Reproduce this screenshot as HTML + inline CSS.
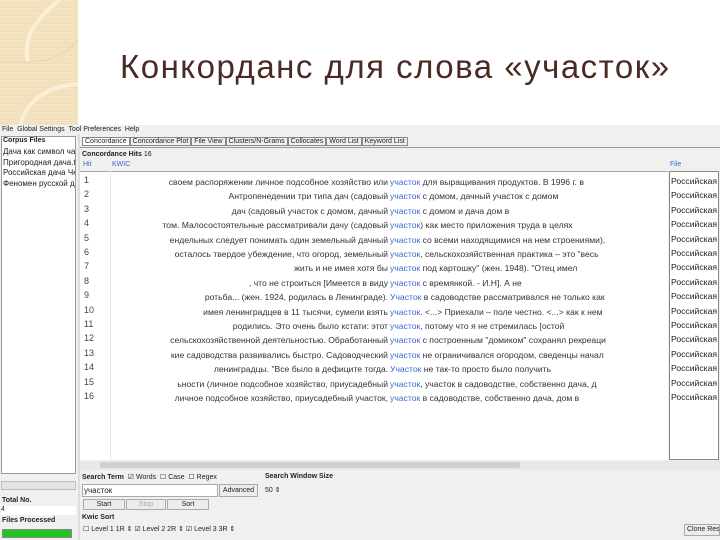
<!DOCTYPE html>
<html><head><meta charset="utf-8"><style>
*{margin:0;padding:0;box-sizing:border-box}
body{width:720px;height:540px;overflow:hidden;background:#fff;position:relative;font-family:"Liberation Sans","DejaVu Sans",sans-serif;font-size:8px;color:#222}
.a{position:absolute;white-space:nowrap}
.title{left:120px;top:48px;font-size:33px;color:#4a2a22;letter-spacing:1.5px;font-family:"Liberation Sans",sans-serif}
.k{color:#3a6ad0}
.row{position:absolute;left:110px;width:558px;height:14px;font-size:8.6px;line-height:14px;color:#333}
.l{position:absolute;right:280px;white-space:nowrap}
.r{position:absolute;left:280px;white-space:nowrap}
.n{position:absolute;left:84px;font-size:9px;color:#444}
.f{position:absolute;left:671px;font-size:8.6px;width:48px;overflow:hidden;white-space:nowrap}
.btn{position:absolute;background:#ececec;border:1px solid #aaa;font-size:7px;text-align:center;line-height:10px;white-space:nowrap;overflow:hidden}
</style></head><body>
<div class="a" style="left:0;top:0;width:78px;height:126px;background:repeating-linear-gradient(#f4e6c6 0 1px,#efdcb4 1px 2px)"></div>
<svg class="a" style="left:0;top:0" width="78" height="126"><path d="M60 0 Q20 30 28 62" stroke="#faf0d8" stroke-width="4" fill="none"/><path d="M0 62 L28 62 Q60 62 78 40" stroke="#e8d4a8" stroke-width="1" fill="none"/><path d="M20 126 Q30 88 78 84" stroke="#faf0d8" stroke-width="4" fill="none"/></svg>
<div class="a title">Конкорданс для слова «участок»</div>
<div class="a" style="left:0;top:125px;width:720px;height:9px;background:#f0f0f0;font-size:7px;line-height:9px">&nbsp;File &nbsp;Global Settings &nbsp;Tool Preferences &nbsp;Help</div>
<div class="a" style="left:0;top:134px;width:720px;height:406px;background:#f0f0f0"></div>
<div class="a" style="left:1px;top:136px;width:75px;height:338px;background:#fff;border:1px solid #999"></div>
<div class="a" style="left:3px;top:137px;font-size:7px;font-weight:bold">Corpus Files</div>
<div class="a" style="left:3px;top:147px;font-size:8px;line-height:10.5px;width:72px;overflow:hidden">Дача как символ час<br>Пригородная дача.txt<br>Российская дача Чем<br>Феномен русской дач</div>
<div class="a" style="left:1px;top:481px;width:75px;height:9px;background:#e4e4e4;border:1px solid #bbb"></div>
<div class="a" style="left:2px;top:497px;font-size:7px;font-weight:bold">Total No.</div>
<div class="a" style="left:1px;top:506px;width:75px;height:9px;background:#fff;font-size:7px">4</div>
<div class="a" style="left:2px;top:517px;font-size:7px;font-weight:bold">Files Processed</div>
<div class="a" style="left:2px;top:529px;width:70px;height:9px;background:#22c422;border:1px solid #888"></div>
<div class="a" style="left:78px;top:134px;width:2px;height:406px;background:#ddd"></div>
<div class="a" style="left:82px;top:137px;font-size:7px;line-height:10px;background:#f0f0f0"><span style="border:1px solid #888;padding:0 2px;background:#fff">Concordance</span><span style="border:1px solid #888;padding:0 2px">Concordance Plot</span><span style="border:1px solid #888;padding:0 2px">File View</span><span style="border:1px solid #888;padding:0 2px">Clusters/N-Grams</span><span style="border:1px solid #888;padding:0 2px">Collocates</span><span style="border:1px solid #888;padding:0 2px">Word List</span><span style="border:1px solid #888;padding:0 2px">Keyword List</span></div>
<div class="a" style="left:80px;top:147px;width:640px;height:1px;background:#999"></div>
<div class="a" style="left:82px;top:151px;font-size:7px;font-weight:bold">Concordance Hits <span style="font-weight:normal">16</span></div>
<div class="a k" style="left:83px;top:161px;font-size:7px">Hit</div>
<div class="a k" style="left:112px;top:161px;font-size:7px">KWIC</div>
<div class="a k" style="left:670px;top:161px;font-size:7px">File</div>
<div class="a" style="left:80px;top:171px;width:588px;height:289px;background:#fff;border-top:1px solid #aaa"></div>
<div class="a" style="left:110px;top:171px;width:1px;height:289px;background:#e8e8e8"></div>
<div class="a" style="left:669px;top:171px;width:50px;height:289px;background:#fff;border:1px solid #888"></div>
<div id="rows"></div>
<div class="a" style="left:80px;top:461px;width:640px;height:9px;background:#e8e8e8"></div>
<div class="a" style="left:100px;top:462px;width:420px;height:6px;background:#d0d0d0;border-radius:2px"></div>
<div class="a" style="left:82px;top:473px;font-size:7px;font-weight:bold">Search Term &nbsp;<span style="font-weight:normal">☑ Words &nbsp;☐ Case &nbsp;☐ Regex</span></div>
<div class="a" style="left:265px;top:473px;font-size:7px;font-weight:bold">Search Window Size</div>
<div class="a" style="left:82px;top:484px;width:136px;height:13px;background:#fff;border:1px solid #aaa;font-size:8px;line-height:12px;padding-left:1px">участок</div>
<div class="btn" style="left:219px;top:484px;width:39px;height:13px;line-height:12px">Advanced</div>
<div class="a" style="left:265px;top:486px;font-size:7px">50 ⇕</div>
<div class="btn" style="left:83px;top:499px;width:42px;height:11px">Start</div>
<div class="btn" style="left:126px;top:499px;width:40px;height:11px;color:#aaa">Stop</div>
<div class="btn" style="left:167px;top:499px;width:42px;height:11px">Sort</div>
<div class="a" style="left:82px;top:514px;font-size:7px;font-weight:bold">Kwic Sort</div>
<div class="a" style="left:83px;top:525px;font-size:7px">☐ Level 1 1R ⇕ ☑ Level 2 2R ⇕ ☑ Level 3 3R ⇕</div>
<div class="btn" style="left:684px;top:524px;width:36px;height:12px;font-size:7px;text-align:left;padding-left:2px">Clone Results</div>
<script>
var d=[["своем распоряжении личное подсобное хозяйство или ","участок"," для выращивания продуктов. В 1996 г. в"],
["Антропенедении три типа дач (садовый ","участок"," с домом, дачный участок с домом"],
["дач (садовый участок с домом, дачный ","участок"," с домом и дача дом в"],
["том. Малосостоятельные рассматривали дачу (садовый ","участок",") как место приложения труда в целях"],
["ендельных следует понимать один земельный дачный ","участок"," со всеми находящимися на нем строениями),"],
["осталось твердое убеждение, что огород, земельный ","участок",", сельскохозяйственная практика – это \"весь"],
["жить и не имея хотя бы ","участок"," под картошку\" (жен. 1948). \"Отец имел"],
[", что не строиться [Имеется в виду ","участок"," с времянкой. - И.Н]. А не"],
["ротьба... (жен. 1924, родилась в Ленинграде). ","Участок"," в садоводстве рассматривался не только как"],
["имея ленинградцев в 11 тысячи, сумели взять ","участок",". <...> Приехали – поле честно. <...> как к нем"],
["родились. Это очень было кстати: этот ","участок",", потому что я не стремилась [остой"],
["сельскохозяйственной деятельностью. Обработанный ","участок"," с построенным \"домиком\" сохранял рекреаци"],
["кие садоводства развивались быстро. Садоводческий ","участок"," не ограничивался огородом, сведенцы начал"],
["ленинградцы. \"Все было в дефиците тогда. ","Участок"," не так-то просто было получить"],
["ьности (личное подсобное хозяйство, приусадебный ","участок",", участок в садоводстве, собственно дача, д"],
["личное подсобное хозяйство, приусадебный участок, ","участок"," в садоводстве, собственно дача, дом в"]];
var h="";
for(var i=0;i<16;i++){var y=175+i*14.4;
h+='<div class="n" style="top:'+y+'px">'+(i+1)+'</div>';
h+='<div class="row" style="top:'+y+'px"><span class="l">'+d[i][0]+'</span><span class="r"><span class="k">'+d[i][1]+'</span>'+d[i][2]+'</span></div>';
h+='<div class="f" style="top:'+(y+1)+'px">Российская</div>';}
document.getElementById("rows").innerHTML=h;
</script>
</body></html>
